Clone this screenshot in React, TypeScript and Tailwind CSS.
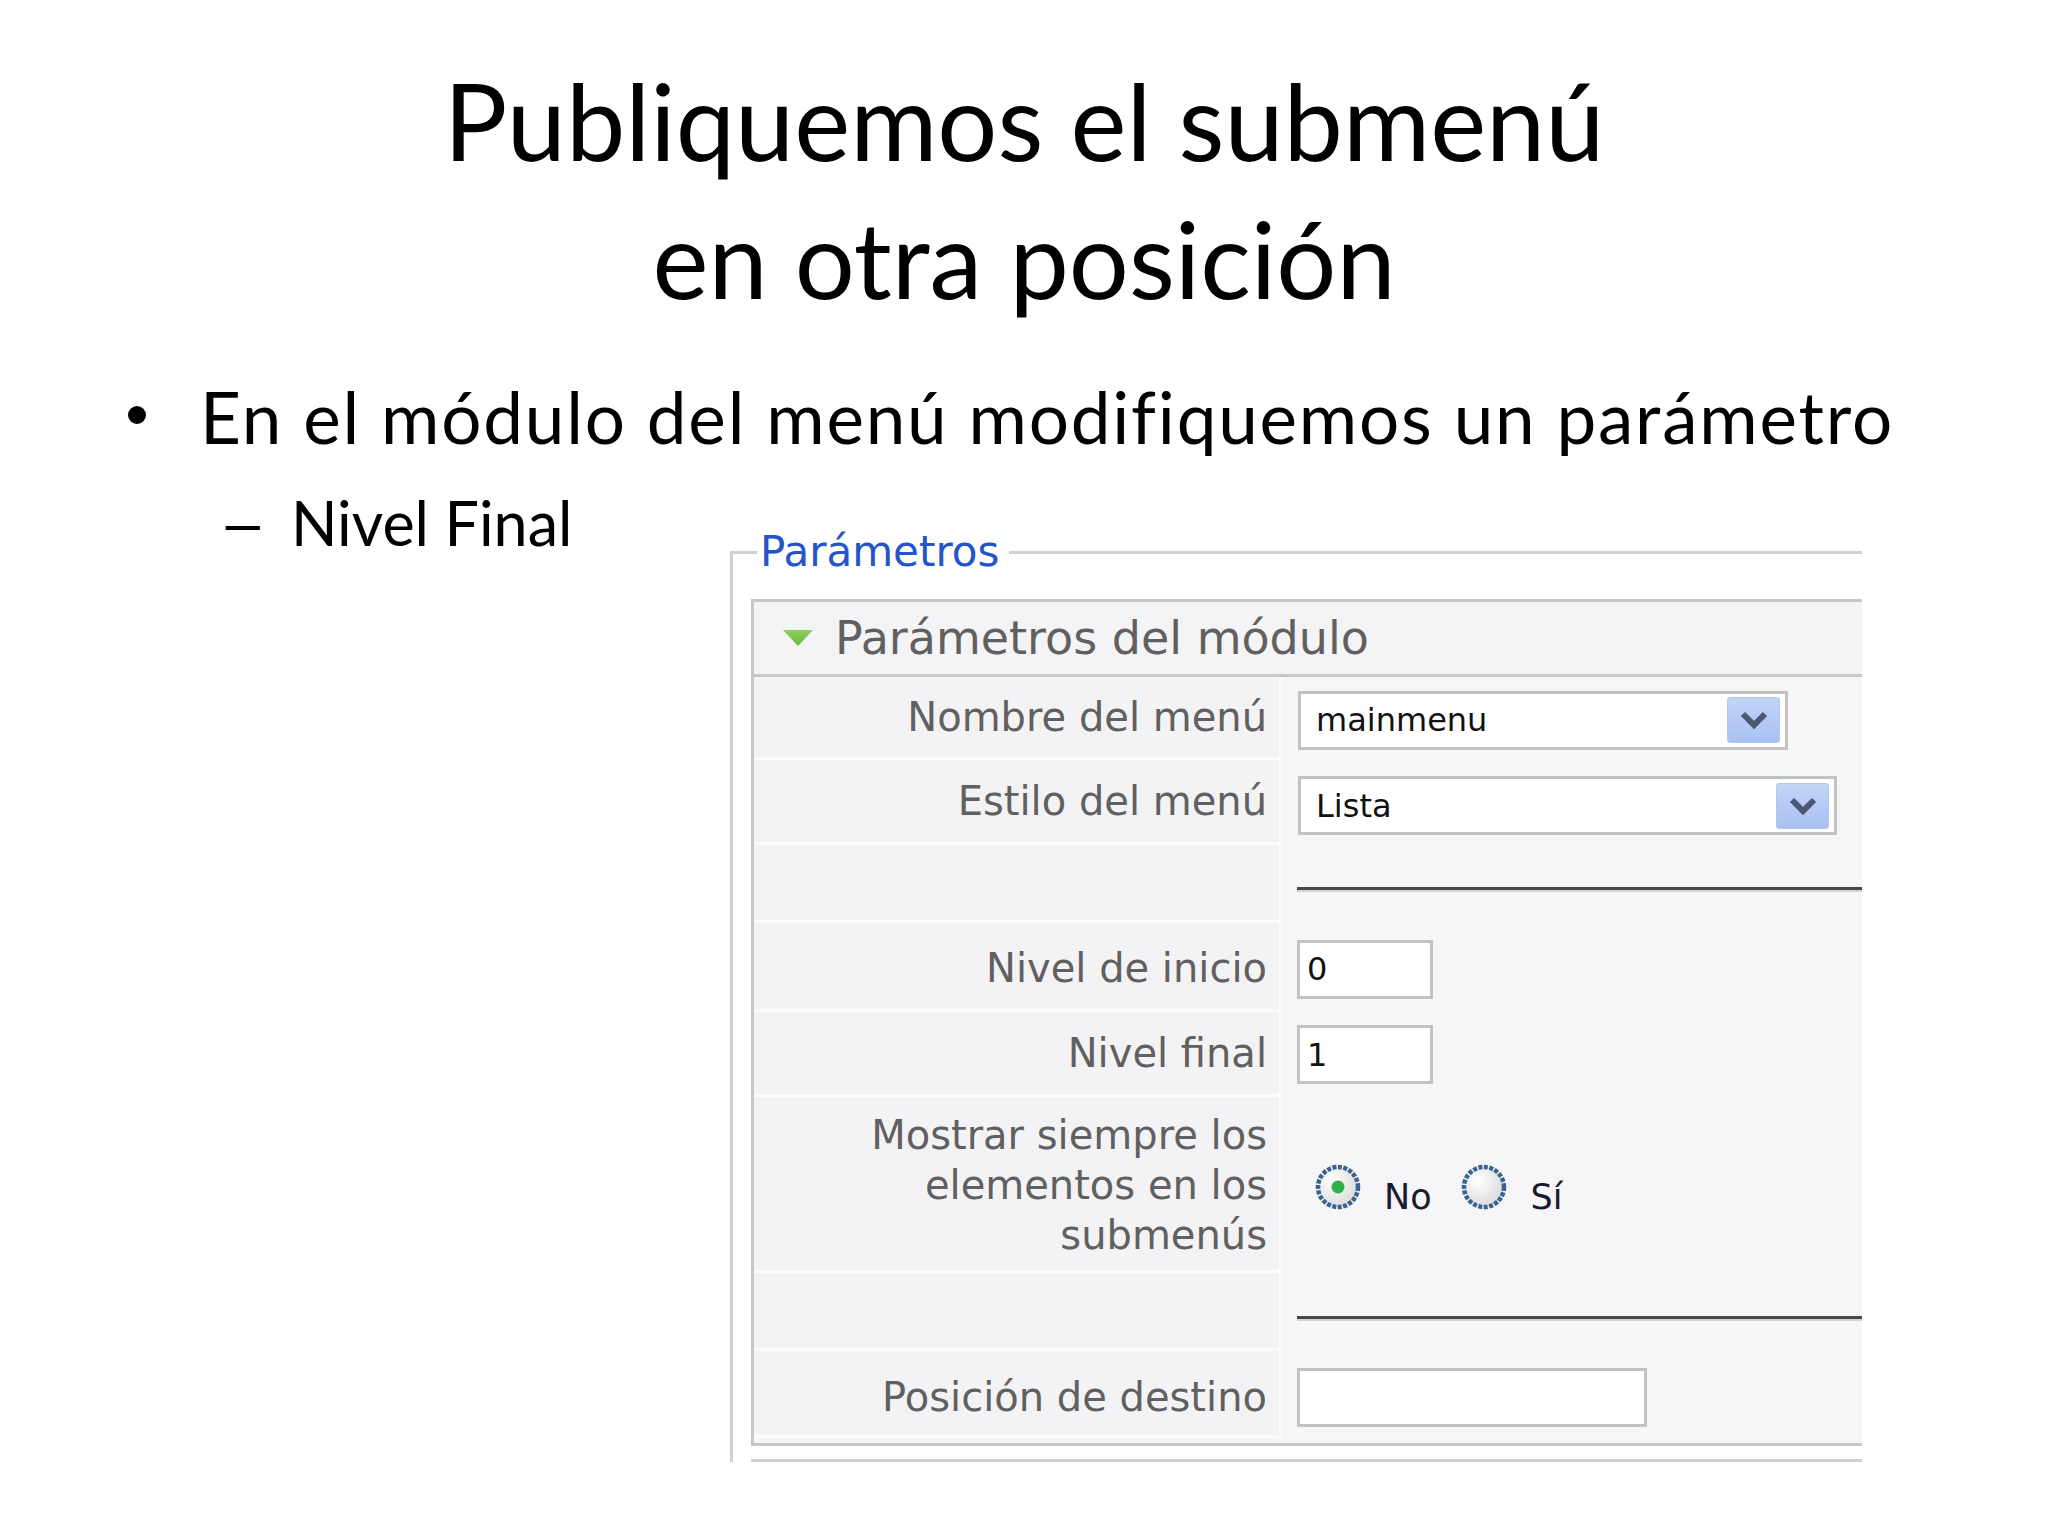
import React from "react";

function Chevron() {
  return (
    <svg width="28" height="18" viewBox="0 0 28 18">
      <polyline points="3,3 14,14 25,3" fill="none" stroke="#4b5874" strokeWidth="6" strokeLinejoin="miter" />
    </svg>
  );
}

function Select({ width, value }: { width: string; value: string }) {
  return (
    <div className={`${width} h-[59px] border-[3px] border-[#c2c2c2] bg-white flex items-center justify-between pl-[15px] pr-[5px]`}>
      <span className="text-[32px] leading-none text-[#111] font-['DejaVu_Sans',sans-serif]">{value}</span>
      <div className="w-[53px] h-[46px] rounded-[3px] bg-gradient-to-b from-[#c3d4f7] to-[#a9c0f1] border border-[#b3c6ee] flex items-center justify-center">
        <Chevron />
      </div>
    </div>
  );
}

function TextInput({ width, value }: { width: string; value: string }) {
  return (
    <div className={`${width} h-[59px] border-[3px] border-[#c2c2c2] bg-white flex items-center pl-[7px]`}>
      <span className="text-[32px] leading-none text-[#111] font-['DejaVu_Sans',sans-serif]">{value}</span>
    </div>
  );
}

function Radio({ checked }: { checked: boolean }) {
  return (
    <svg width="46" height="46" viewBox="0 0 46 46">
      <defs>
        <radialGradient id={checked ? "rg1" : "rg2"} cx="35%" cy="35%" r="70%">
          <stop offset="0%" stopColor="#ffffff" />
          <stop offset="100%" stopColor="#dadada" />
        </radialGradient>
      </defs>
      <circle cx="23" cy="23" r="20" fill={`url(#${checked ? "rg1" : "rg2"})`} stroke="#3a628f" strokeWidth="4.5" strokeDasharray="4 1.5" />
      {checked && <circle cx="23" cy="23" r="6.5" fill="#2fb14a" />}
    </svg>
  );
}

function Separator() {
  return (
    <div className="w-full">
      <div className="h-[3px] bg-[#474747]" />
      <div className="h-[2px] bg-[#d4d4d4]" />
    </div>
  );
}

function Label({ children, extra = "" }: { children: React.ReactNode; extra?: string }) {
  return (
    <div className={`w-[528px] h-full shrink-0 bg-[#f3f3f5] border-b-[3px] border-r-[3px] border-[#fcfcfc] flex items-center justify-end pr-[12px] text-right text-[40px] leading-[50px] text-[#606060] font-['DejaVu_Sans',sans-serif] ${extra}`}>
      <div>{children}</div>
    </div>
  );
}

export default function App() {
  return (
    <div className="w-[2048px] h-[1536px] bg-white overflow-hidden font-['Lato',sans-serif] text-black">
      {/* Title */}
      <div className="pt-[51px] text-center text-[106px] leading-[138px]">
        <div>Publiquemos el submenú</div>
        <div>en otra posición</div>
      </div>

      {/* Bullet */}
      <div className="mt-[50px] flex h-[80px] pl-[128px]">
        <div className="w-[18px] h-[18px] rounded-full bg-black mt-[29px]" />
        <div className="ml-[54px] text-[71px] leading-[80px] tracking-[1.8px] whitespace-nowrap">
          En el módulo del menú modifiquemos un parámetro
        </div>
      </div>

      {/* Sub bullet + panel */}
      <div className="mt-[31px] flex items-start">
        <div className="w-[730px] shrink-0 flex h-[70px] pl-[218px] text-[61px] leading-[70px] whitespace-nowrap">
          <span className="w-[73px]">
            <span className="inline-block scale-x-[1.4] origin-left">–</span>
          </span>
          <span>Nivel Final</span>
        </div>

        {/* Fieldset */}
        <div className="mt-[39px] w-[1132px]">
          <div className="flex items-center h-[50px]">
            <div className="w-[27px] h-[26px] self-end border-l-[3px] border-t-[3px] border-[#d0d0d0]" />
            <span className="pl-[3px] pr-[10px] text-[42px] leading-none text-[#2454c9] font-['DejaVu_Sans',sans-serif]">
              Parámetros
            </span>
            <div className="flex-1 border-t-[3px] border-[#d0d0d0]" />
          </div>

          <div className="border-l-[3px] border-[#d0d0d0] pl-[18px] pt-[22px]">
            <div className="w-[1111px] border-t-[3px] border-l-[3px] border-b-[3px] border-[#c8c8c8] bg-[#f6f6f8] pb-[5px]">
              {/* Header */}
              <div className="h-[75px] border-b-[3px] border-[#c8c8c8] flex items-center pl-[28px] bg-[#f4f4f6]">
                <svg width="32" height="18" viewBox="0 0 32 18">
                  <defs>
                    <linearGradient id="tri" x1="0" y1="0" x2="0" y2="1">
                      <stop offset="0%" stopColor="#8fd05d" />
                      <stop offset="100%" stopColor="#6cb63e" />
                    </linearGradient>
                  </defs>
                  <polygon points="1,1 31,1 16,17" fill="url(#tri)" />
                </svg>
                <span className="ml-[21px] text-[46px] leading-none text-[#606060] font-['DejaVu_Sans',sans-serif]">
                  Parámetros del módulo
                </span>
              </div>

              {/* Rows */}
              <div className="flex h-[83px]">
                <Label>Nombre del menú</Label>
                <div className="flex-1 pl-[16px] flex items-center pt-[3px]">
                  <Select width="w-[490px]" value="mainmenu" />
                </div>
              </div>

              <div className="flex h-[85px]">
                <Label>Estilo del menú</Label>
                <div className="flex-1 pl-[16px] flex items-center pt-[6px]">
                  <Select width="w-[539px]" value="Lista" />
                </div>
              </div>

              <div className="flex h-[78px]">
                <Label>{""}</Label>
                <div className="flex-1 pl-[15px] pt-[42px]">
                  <Separator />
                </div>
              </div>

              <div className="flex h-[89px]">
                <Label extra="pt-[4px]">Nivel de inicio</Label>
                <div className="flex-1 pl-[15px] flex items-center pt-[3px]">
                  <TextInput width="w-[136px]" value="0" />
                </div>
              </div>

              <div className="flex h-[85px]">
                <Label>Nivel final</Label>
                <div className="flex-1 pl-[15px] flex items-center">
                  <TextInput width="w-[136px]" value="1" />
                </div>
              </div>

              <div className="flex h-[176px]">
                <Label extra="pt-[3px]">
                  Mostrar siempre los
                  <br />
                  elementos en los
                  <br />
                  submenús
                </Label>
                <div className="flex-1 pl-[33px] flex items-center pt-[4px]">
                  <div className="flex items-end text-[35px] leading-none text-[#1a1a2e] font-['DejaVu_Sans',sans-serif]">
                    <Radio checked />
                    <span className="ml-[23px] -mb-[5px]">No</span>
                    <span className="ml-[29px]">
                      <Radio checked={false} />
                    </span>
                    <span className="ml-[24px] -mb-[5px]">Sí</span>
                  </div>
                </div>
              </div>

              <div className="flex h-[78px]">
                <Label>{""}</Label>
                <div className="flex-1 pl-[15px] pt-[43px]">
                  <Separator />
                </div>
              </div>

              <div className="flex h-[87px]">
                <Label extra="pt-[8px]">Posición de destino</Label>
                <div className="flex-1 pl-[15px] flex items-center pt-[6px]">
                  <TextInput width="w-[350px]" value="" />
                </div>
              </div>
            </div>

            <div className="mt-[13px] w-[1111px] border-t-[3px] border-[#d0d0d0]" />
          </div>
        </div>
      </div>
    </div>
  );
}
